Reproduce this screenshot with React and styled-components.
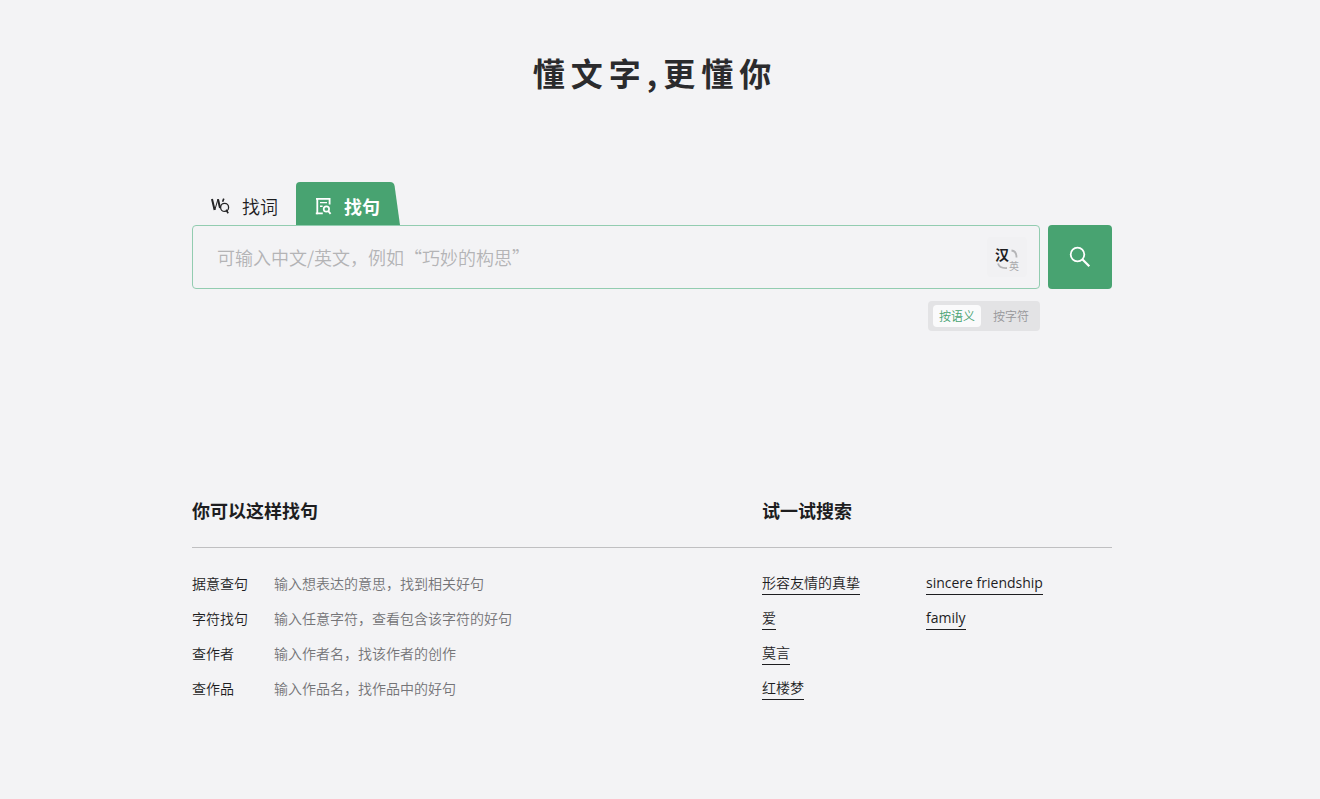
import React, { useState } from 'react';
import styled, { createGlobalStyle } from 'styled-components';

const GlobalStyle = createGlobalStyle`
  * {
    box-sizing: border-box;
  }

  body {
    margin: 0;
    background: #f3f3f5;
    color: #1d1d1f;
    font-family: 'Open Sans', 'Noto Sans CJK SC', sans-serif;
    font-size: 14px;
  }

  button,
  input {
    font: inherit;
  }
`;

const Page = styled.main`
  padding: 48px 16px 40px 0;
`;

const Content = styled.div`
  width: 100%;
  max-width: 920px;
  margin: 0 auto;
`;

const Title = styled.h1`
  display: flex;
  justify-content: center;
  gap: 6px;
  margin: 0 0 86px;
  color: #2b2b2d;
  font-family: 'Noto Sans CJK SC', sans-serif;
  font-size: 32px;
  font-weight: 700;
  line-height: 48px;
`;

const Tabs = styled.div`
  display: flex;
`;

const Tab = styled.button`
  display: flex;
  align-items: center;
  gap: 12px;
  width: 104px;
  height: 43px;
  padding: 4px 0 0 18px;
  border: 0;
  background: none;
  color: ${({ $active }) => ($active ? '#fff' : '#1d1d1f')};
  font-family: 'Noto Sans CJK SC', sans-serif;
  font-size: 18px;
  font-weight: ${({ $active }) => ($active ? 700 : 350)};
  line-height: 24px;
  position: relative;
  isolation: isolate;
  cursor: pointer;
`;

const TabShape = styled.svg`
  position: absolute;
  inset: 0;
  z-index: -1;
`;

const SearchRow = styled.form`
  display: flex;
  gap: 8px;
`;

const SearchBox = styled.div`
  display: flex;
  align-items: center;
  flex: 1;
  height: 64px;
  padding: 0 12px 0 24px;
  border: 1px solid #92ccb0;
  border-radius: 4px;
`;

const SearchInput = styled.input`
  flex: 1;
  min-width: 0;
  padding: 0;
  border: 0;
  outline: 0;
  background: none;
  font-family: 'Noto Sans CJK SC', sans-serif;
  font-size: 18px;
  font-weight: 350;

  &::placeholder {
    color: #b4b4b6;
    opacity: 1;
  }
`;

const LangButton = styled.button`
  display: grid;
  place-items: center;
  width: 40px;
  height: 40px;
  padding: 0;
  border: 0;
  border-radius: 4px;
  background: #f1f1f3;
  cursor: pointer;

  text {
    font-family: 'Noto Sans CJK SC', sans-serif;
  }
`;

const SearchButton = styled.button`
  display: grid;
  place-items: center;
  width: 64px;
  height: 64px;
  padding: 0;
  border: 0;
  border-radius: 4px;
  background: #48a371;
  cursor: pointer;
`;

const ModeSwitch = styled.div`
  display: flex;
  width: 112px;
  height: 30px;
  margin: 12px 72px 0 auto;
  padding: 4px 5px;
  gap: 6px;
  border-radius: 4px;
  background: #e3e3e5;
`;

const Mode = styled.button`
  flex: 1;
  padding: 2px 0 0;
  border: 0;
  border-radius: 4px;
  background: ${({ $active }) => ($active ? '#fafafb' : 'none')};
  color: ${({ $active }) => ($active ? '#48a371' : '#97979a')};
  font-size: 12px;
  font-weight: 350;
  line-height: 20px;
  cursor: pointer;
`;

const Guide = styled.section`
  display: grid;
  grid-template-columns: 570px 1fr;
  margin-top: 167px;
`;

const GuideTitle = styled.h2`
  margin: 0;
  padding-bottom: 23px;
  border-bottom: 1px solid #bfbfc1;
  font-size: 18px;
  font-weight: 700;
  line-height: 26px;
`;

const Tips = styled.dl`
  display: grid;
  grid-template-columns: 82px 1fr;
  grid-auto-rows: 35px;
  align-content: start;
  margin: 18px 0 0;
  font-family: 'Noto Sans CJK SC', sans-serif;
  font-weight: 350;
  line-height: 35px;

  dd {
    margin: 0;
    color: #747477;
  }
`;

const Examples = styled.div`
  display: grid;
  grid-template-columns: 164px 1fr;
  margin-top: 24px;
`;

const ExampleList = styled.ul`
  display: flex;
  flex-direction: column;
  align-items: flex-start;
  gap: 12px;
  margin: 0;
  padding: 0;
  font-weight: 350;
  list-style: none;

  &:lang(en) {
    font-weight: 400;
  }
`;

const ExampleLink = styled.a`
  display: block;
  border-bottom: 1px solid #1d1d1f;
  color: #1d1d1f;
  line-height: 22px;
  text-decoration: none;
`;

const tips = [
  ['据意查句', '输入想表达的意思，找到相关好句'],
  ['字符找句', '输入任意字符，查看包含该字符的好句'],
  ['查作者', '输入作者名，找该作者的创作'],
  ['查作品', '输入作品名，找作品中的好句'],
];

const examples = [
  { lang: 'zh', words: ['形容友情的真挚', '爱', '莫言', '红楼梦'] },
  { lang: 'en', words: ['sincere friendship', 'family'] },
];

const WordIcon = () => (
  <svg width="20" height="18" viewBox="0 0 20 18" fill="none" stroke="#242426">
    <path d="M2 2 4.600 13" strokeWidth="2" />
    <path d="M4.800 13 8 2" strokeWidth="1" />
    <path d="M8 2.200 10 11" strokeWidth="2" />
    <path d="M12.600 4.800 13.800 1.600" strokeWidth="1.600" />
    <circle cx="14.600" cy="10.400" r="4" strokeWidth="1.300" />
    <path d="m16 12.800 2.200 3.400" strokeWidth="1.600" />
  </svg>
);

const SentenceIcon = () => (
  <svg width="18" height="18" viewBox="0 0 18 18" fill="none" stroke="#fff" strokeWidth="1.800">
    <path d="M15.600 7.500V1.900H3.300V16.300H8.800" />
    <path d="M2 1.900h2M1.800 16.300h2" />
    <path d="M6 5.600h7M6 9.200h2.600" strokeWidth="1.400" />
    <circle cx="12.400" cy="12" r="2.700" strokeWidth="1.700" />
    <path d="m14.200 14 2.400 2.900" />
  </svg>
);

const LangIcon = () => (
  <svg width="26" height="30" viewBox="0 0 26 30" fill="none" stroke="#b5b5b7" strokeWidth="1.800">
    <text x="1" y="18" fill="#1d1d1f" stroke="none" fontSize="14" fontWeight="700">汉</text>
    <text x="15" y="28" fill="#a9a9ab" stroke="none" fontSize="10">英</text>
    <path d="M17.500 8.500q5 .5 5 7" />
    <path d="M4 21.500q1.500 5 9 4.500" />
  </svg>
);

const App = () => {
  const [tab, setTab] = useState('sentence');
  const [mode, setMode] = useState('meaning');

  return (
    <>
      <GlobalStyle />
      <Page>
        <Content>
          <Title>
            {[...'懂文字,更懂你'].map((char, i) => (
              <span key={i}>{char}</span>
            ))}
          </Title>
          <Tabs>
            <Tab type="button" $active={tab === 'word'} onClick={() => setTab('word')}>
              <WordIcon />
              找词
            </Tab>
            <Tab type="button" $active={tab === 'sentence'} onClick={() => setTab('sentence')}>
              <TabShape width="104" height="43" viewBox="0 0 104 43" aria-hidden="true">
                <path d="M0 43V4Q0 0 4 0H94Q98 0 98.600 4L104 43Z" fill="#48a371" />
              </TabShape>
              <SentenceIcon />
              找句
            </Tab>
          </Tabs>
          <SearchRow onSubmit={(e) => e.preventDefault()}>
            <SearchBox>
              <SearchInput aria-label="搜索" placeholder="可输入中文/英文，例如“巧妙的构思”" />
              <LangButton type="button" aria-label="切换语言">
                <LangIcon />
              </LangButton>
            </SearchBox>
            <SearchButton aria-label="搜索">
              <svg width="22" height="22" viewBox="0 0 22 22" fill="none" stroke="#fff" strokeWidth="1.800">
                <circle cx="8.500" cy="8.500" r="6.800" />
                <path d="m13.300 13.300 7 7" strokeWidth="2.200" />
              </svg>
            </SearchButton>
          </SearchRow>
          <ModeSwitch>
            <Mode type="button" $active={mode === 'meaning'} onClick={() => setMode('meaning')}>
              按语义
            </Mode>
            <Mode type="button" $active={mode === 'character'} onClick={() => setMode('character')}>
              按字符
            </Mode>
          </ModeSwitch>
          <Guide>
            <div>
              <GuideTitle>你可以这样找句</GuideTitle>
              <Tips>
                {tips.map(([name, text]) => (
                  <React.Fragment key={name}>
                    <dt>{name}</dt>
                    <dd>{text}</dd>
                  </React.Fragment>
                ))}
              </Tips>
            </div>
            <div>
              <GuideTitle>试一试搜索</GuideTitle>
              <Examples>
                {examples.map(({ lang, words }) => (
                  <ExampleList key={lang} lang={lang}>
                    {words.map((word) => (
                      <li key={word}>
                        <ExampleLink href={`#${word}`}>{word}</ExampleLink>
                      </li>
                    ))}
                  </ExampleList>
                ))}
              </Examples>
            </div>
          </Guide>
        </Content>
      </Page>
    </>
  );
};

export default App;
